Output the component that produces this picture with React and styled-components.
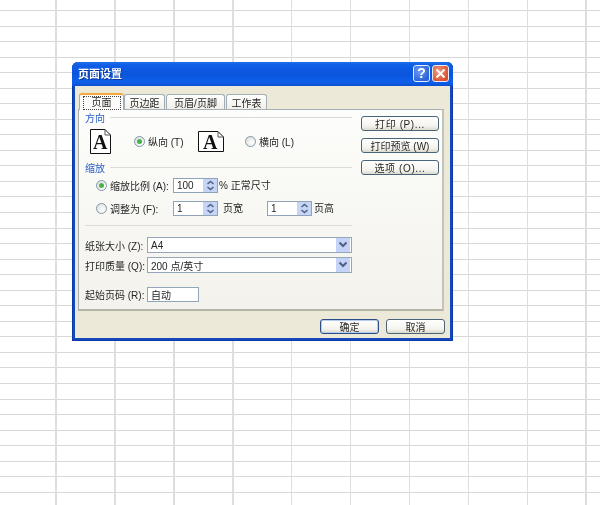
import React from 'react';
import styled, { createGlobalStyle } from 'styled-components';

const Global = createGlobalStyle`
  html, body { margin: 0; padding: 0; background: #fff; }
  * { box-sizing: border-box; }
`;

const FONT = `"Liberation Sans", "Noto Sans CJK SC", sans-serif`;

const Sheet = styled.div`
  width: 600px;
  height: 505px;
  overflow: hidden;
  padding: 62px 0 0 72px;
  font-family: ${FONT};
  font-size: 10px;
  color: #262626;
  filter: blur(0.3px);
  background-color: #fff;
  background-image:
    repeating-linear-gradient(to right, transparent 0, transparent 55.4px, #dedede 55.4px, #dedede 56.9px, transparent 56.9px, transparent 58.9px),
    repeating-linear-gradient(to bottom, transparent 0, transparent 10px, #d8d8d8 10px, #d8d8d8 11px, transparent 11px, transparent 15.54px);
`;

const Dialog = styled.div`
  width: 381px;
  height: 279px;
  display: flex;
  flex-direction: column;
  padding: 0 3px 3px;
  border-radius: 6px 6px 0 0;
  background: #1547bd;
  box-shadow: inset 1px 0 #0c3aa8, inset -1px 0 #0c3aa8, inset 0 -1px #0c3aa8;
`;

const TitleBar = styled.div`
  height: 24px;
  margin: 0 -3px;
  padding: 0 4px 2px 6px;
  display: flex;
  align-items: center;
  justify-content: space-between;
  border-radius: 6px 6px 0 0;
  background: linear-gradient(to bottom, #1f6ee8 0, #0f5fe6 3px, #0a55dc 12px, #0f60ea 20px, #0c50d0 24px);
`;

const TitleText = styled.span`
  font-size: 11px;
  font-weight: 700;
  color: #fff;
  text-shadow: 1px 1px 0 #0a3a9c;
`;

const TitleButtons = styled.div`
  display: flex;
  gap: 2px;
`;

const CaptionButton = styled.div`
  width: 17px;
  height: 17px;
  display: flex;
  align-items: center;
  justify-content: center;
  border: 1px solid #e6ecfa;
  border-radius: 3px;
  color: #fff;
  font-size: 14px;
  font-weight: 700;
  line-height: 1;
  background: ${p => p.$close
    ? 'radial-gradient(circle at 35% 35%, #ee9a80, #d8512f 75%)'
    : 'radial-gradient(circle at 35% 35%, #6f9cf0, #2b62dc 75%)'};
`;

const Body = styled.div`
  flex: 1;
  padding: 7px 5px 0 3px;
  display: flex;
  flex-direction: column;
  background: #ece9d8;
`;

const Tabs = styled.div`
  height: 16px;
  padding-left: 1px;
  display: flex;
  align-items: flex-end;
  position: relative;
  z-index: 1;
`;

const Tab = styled.div`
  width: ${p => p.$w}px;
  height: ${p => (p.$active ? 17 : 15)}px;
  margin-right: ${p => (p.$active ? 0 : 1)}px;
  margin-bottom: ${p => (p.$active ? -1 : 0)}px;
  display: flex;
  align-items: center;
  justify-content: center;
  border: 1px solid #a3aeb5;
  border-bottom: none;
  border-radius: 3px 3px 0 0;
  background: ${p => (p.$active ? '#fcfcfa' : 'linear-gradient(to bottom, #fff, #f0efe8)')};
  border-top: ${p => (p.$active ? '2px solid #f2a93b' : '1px solid #a3aeb5')};
`;

const Focused = styled.span`
  padding: 0 8px;
  line-height: 12px;
  border: 1px dotted #444;
`;

const Panel = styled.div`
  width: 366px;
  height: 202px;
  padding: 0 0 0 6px;
  display: flex;
  border: 1px solid #a4aeb4;
  border-bottom: 2px solid #b5b4a8;
  border-right: 2px solid #c4c3b8;
  background: linear-gradient(to bottom, #fdfdfb, #f3f2ec);
`;

const Main = styled.div`
  width: 267px;
  display: flex;
  flex-direction: column;
`;

const Heading = styled.div`
  height: 14px;
  margin-top: ${p => p.$top || 0}px;
  display: flex;
  align-items: center;
  gap: 5px;
  color: #2a5fc4;
  &::after {
    content: '';
    flex: 1;
    height: 1px;
    background: #dedcd2;
  }
`;

const Orientation = styled.div`
  height: 25px;
  margin: 5px 0 0 5px;
  display: flex;
  align-items: center;
`;

const PortraitSlot = styled.div`
  width: 44px;
  display: flex;
`;

const LandscapeSlot = styled.div`
  width: 47px;
  display: flex;
`;

const Choice = styled.label`
  width: ${p => p.$w}px;
  display: flex;
  align-items: center;
  gap: 3px;
  white-space: nowrap;
`;

const Radio = styled.span`
  width: 11px;
  height: 11px;
  flex: none;
  display: flex;
  align-items: center;
  justify-content: center;
  border: 1px solid #7f98ad;
  border-radius: 50%;
  background: radial-gradient(circle at 70% 70%, #fff, #dcdcd4);
  &::after {
    content: '';
    width: 5px;
    height: 5px;
    border-radius: 50%;
    background: ${p => (p.$on ? '#4bb04b' : 'transparent')};
  }
`;

const ScaleRow = styled.div`
  height: 15px;
  margin: ${p => p.$top}px 0 0 11px;
  display: flex;
  align-items: center;
`;

const Spinner = styled.div`
  width: 45px;
  height: 15px;
  display: flex;
  align-items: center;
  padding-left: 3px;
  border: 1px solid #8fa4b8;
  background: #fff;
`;

const SpinValue = styled.span`
  flex: 1;
`;

const SpinButton = styled.div`
  width: 14px;
  height: 13px;
  display: flex;
  align-items: center;
  justify-content: center;
  background: #c6d4f6;
`;

const Unit = styled.span`
  margin-left: ${p => p.$left}px;
  padding-bottom: ${p => p.$lift || 0}px;
  white-space: nowrap;
`;

const SecondSpinner = styled.div`
  margin-left: 24px;
  display: flex;
`;

const Rule = styled.div`
  height: 1px;
  margin-top: 9px;
  background: #dedcd2;
`;

const FieldRow = styled.div`
  height: 16px;
  margin-top: ${p => p.$top}px;
  display: flex;
  align-items: center;
`;

const FieldLabel = styled.span`
  width: 62px;
  flex: none;
  white-space: nowrap;
`;

const Combo = styled.div`
  width: 205px;
  height: 16px;
  padding: 0 1px 0 3px;
  display: flex;
  align-items: center;
  justify-content: space-between;
  border: 1px solid #93a6ba;
  background: #fff;
`;

const ComboButton = styled.div`
  width: 14px;
  height: 14px;
  display: flex;
  align-items: center;
  justify-content: center;
  background: #c4d3f7;
`;

const TextBox = styled.div`
  width: 52px;
  height: 15px;
  padding-left: 3px;
  display: flex;
  align-items: center;
  border: 1px solid #93a6ba;
  background: #fff;
`;

const Side = styled.div`
  margin: 6px 0 0 9px;
  display: flex;
  flex-direction: column;
  gap: 7px;
`;

const Button = styled.div`
  width: ${p => p.$w}px;
  height: 15px;
  display: flex;
  align-items: center;
  justify-content: center;
  white-space: nowrap;
  letter-spacing: ${p => p.$wide || 0}px;
  border: 1px solid ${p => (p.$default ? '#2a4f86' : '#4a6478')};
  border-radius: 3px;
  background: linear-gradient(to bottom, #fff, #f4f3ee 70%, #dcd9cc);
  box-shadow: ${p => (p.$default ? 'inset 0 0 0 1px #b6cdf0' : 'none')};
`;

const Footer = styled.div`
  margin-top: 8px;
  display: flex;
  justify-content: flex-end;
  gap: 7px;
`;

const Portrait = () => (
  <svg width="21" height="25" viewBox="0 0 21 25">
    <path d="M.5.5H15L20.5 6V24.5H.5Z" fill="#fff" stroke="#111" />
    <path d="M15 .5V6H20.5" fill="none" stroke="#555" />
    <text x="10.3" y="20" textAnchor="middle" fontFamily="Liberation Serif" fontWeight="700" fontSize="20" fill="#111">A</text>
  </svg>
);

const Landscape = () => (
  <svg width="26" height="21" viewBox="0 0 26 21">
    <path d="M.5.5H20L25.5 6V20.5H.5Z" fill="#fff" stroke="#111" />
    <path d="M20 .5V6H25.5" fill="none" stroke="#555" />
    <text x="12.3" y="18" textAnchor="middle" fontFamily="Liberation Serif" fontWeight="700" fontSize="20" fill="#111">A</text>
  </svg>
);

const SpinIcon = () => (
  <svg width="9" height="11" viewBox="0 0 9 11">
    <path d="M1.5 4L4.5 1.5L7.5 4M1.5 7L4.5 9.5L7.5 7" fill="none" stroke="#4d6185" strokeWidth="1.5" />
  </svg>
);

const ChevronIcon = () => (
  <svg width="10" height="8" viewBox="0 0 10 8">
    <path d="M1.5 1.5L5 5L8.5 1.5" fill="none" stroke="#4d6185" strokeWidth="2" />
  </svg>
);

const CloseIcon = () => (
  <svg width="11" height="11" viewBox="0 0 11 11">
    <path d="M1.5 1.5L9.5 9.5M9.5 1.5L1.5 9.5" stroke="#fff" strokeWidth="2" />
  </svg>
);

const Spin = ({ value }) => (
  <Spinner>
    <SpinValue>{value}</SpinValue>
    <SpinButton><SpinIcon /></SpinButton>
  </Spinner>
);

export default function App() {
  return (
    <Sheet>
      <Global />
      <Dialog>
        <TitleBar>
          <TitleText>页面设置</TitleText>
          <TitleButtons>
            <CaptionButton>?</CaptionButton>
            <CaptionButton $close><CloseIcon /></CaptionButton>
          </TitleButtons>
        </TitleBar>
        <Body>
          <Tabs>
            <Tab $active $w={45}><Focused>页面</Focused></Tab>
            <Tab $w={41}>页边距</Tab>
            <Tab $w={59}>页眉/页脚</Tab>
            <Tab $w={41}>工作表</Tab>
          </Tabs>
          <Panel>
            <Main>
              <Heading>方向</Heading>
              <Orientation>
                <PortraitSlot><Portrait /></PortraitSlot>
                <Choice $w={64}><Radio $on />纵向 (T)</Choice>
                <LandscapeSlot><Landscape /></LandscapeSlot>
                <Choice><Radio />横向 (L)</Choice>
              </Orientation>
              <Heading $top={6}>缩放</Heading>
              <ScaleRow $top={4}>
                <Choice $w={77}><Radio $on />缩放比例 (A):</Choice>
                <Spin value="100" />
                <Unit $left={1} $lift={2}>% 正常尺寸</Unit>
              </ScaleRow>
              <ScaleRow $top={8}>
                <Choice $w={77}><Radio />调整为 (F):</Choice>
                <Spin value="1" />
                <Unit $left={5} $lift={3}>页宽</Unit>
                <SecondSpinner><Spin value="1" /></SecondSpinner>
                <Unit $left={2} $lift={3}>页高</Unit>
              </ScaleRow>
              <Rule />
              <FieldRow $top={11}>
                <FieldLabel>纸张大小 (Z):</FieldLabel>
                <Combo>A4<ComboButton><ChevronIcon /></ComboButton></Combo>
              </FieldRow>
              <FieldRow $top={4}>
                <FieldLabel>打印质量 (Q):</FieldLabel>
                <Combo>200 点/英寸<ComboButton><ChevronIcon /></ComboButton></Combo>
              </FieldRow>
              <FieldRow $top={13}>
                <FieldLabel>起始页码 (R):</FieldLabel>
                <TextBox>自动</TextBox>
              </FieldRow>
            </Main>
            <Side>
              <Button $w={78} $wide={0.6}>打印 (P)...</Button>
              <Button $w={78}>打印预览 (W)</Button>
              <Button $w={78} $wide={0.6}>选项 (O)...</Button>
            </Side>
          </Panel>
          <Footer>
            <Button $w={59} $default>确定</Button>
            <Button $w={59}>取消</Button>
          </Footer>
        </Body>
      </Dialog>
    </Sheet>
  );
}
